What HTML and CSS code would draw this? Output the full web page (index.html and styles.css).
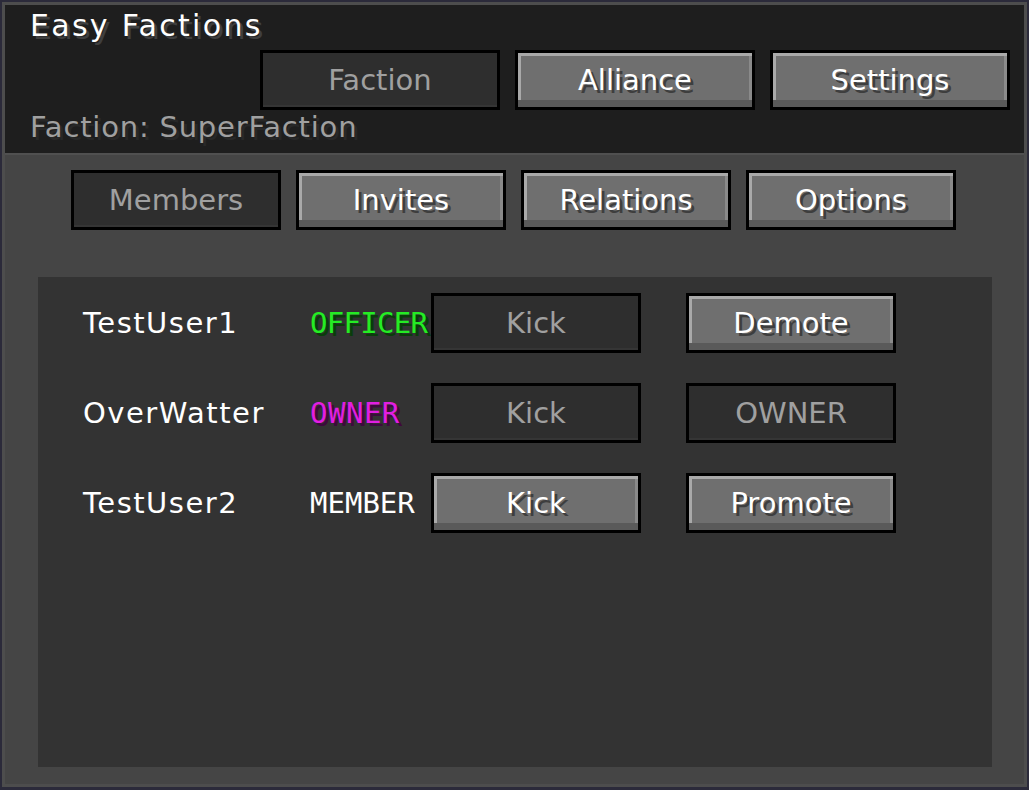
FILE: index.html
```html
<!DOCTYPE html>
<html lang="en">
<head>
<meta charset="utf-8">
<title>Easy Factions</title>
<link rel="stylesheet" href="styles.css">
</head>
<body>
<div class="window">
  <header class="head">
    <h1 class="title">Easy Factions</h1>
    <nav class="tabs-main">
      <button class="btn wide off">Faction</button>
      <button class="btn wide">Alliance</button>
      <button class="btn wide">Settings</button>
    </nav>
    <p class="subtitle">Faction: SuperFaction</p>
  </header>
  <section class="content">
    <nav class="tabs-sub">
      <button class="btn off">Members</button>
      <button class="btn">Invites</button>
      <button class="btn">Relations</button>
      <button class="btn">Options</button>
    </nav>
    <div class="panel">
      <div class="members">
        <span class="name">TestUser1</span>
        <span class="role officer">OFFICER</span>
        <button class="btn off">Kick</button>
        <button class="btn">Demote</button>

        <span class="name">OverWatter</span>
        <span class="role owner">OWNER</span>
        <button class="btn off">Kick</button>
        <button class="btn off">OWNER</button>

        <span class="name">TestUser2</span>
        <span class="role member">MEMBER</span>
        <button class="btn">Kick</button>
        <button class="btn">Promote</button>
      </div>
    </div>
  </section>
</div>
</body>
</html>
```
FILE: styles.css
```css
html, body {
  margin: 0;
  padding: 0;
}
body {
  background: #2b2a3a;
  width: 1029px;
  height: 790px;
  overflow: hidden;
  font-family: "DejaVu Sans", "Liberation Sans", sans-serif;
}
.window {
  box-sizing: border-box;
  margin: 2px 0 0 2px;
  width: 1025px;
  height: 785px;
  border: 3px solid #4d4d4d;
  display: flex;
  flex-direction: column;
  background: #454545;
}
.head {
  box-sizing: border-box;
  height: 150px;
  background: #1e1e1e;
  border-bottom: 2px solid #505050;
  padding: 6px 14px 0 25px;
  display: flex;
  flex-direction: column;
}
.title {
  margin: 0;
  font-weight: normal;
  font-size: 30px;
  line-height: 30px;
  letter-spacing: 2.3px;
  color: #ffffff;
  text-shadow: 3px 3px 0 #3f3f3f;
}
.tabs-main {
  display: flex;
  justify-content: flex-end;
  gap: 15px;
  margin-top: 9px;
}
.subtitle {
  margin: 3px 0 0 0;
  font-size: 29px;
  line-height: 29px;
  letter-spacing: 0.8px;
  color: #a0a0a0;
  text-shadow: 3px 3px 0 #282828;
}
.btn {
  box-sizing: border-box;
  width: 210px;
  height: 60px;
  padding: 0;
  margin: 0;
  border: 3px solid #000000;
  background: #6f6f6f;
  box-shadow: inset 0 -7px 0 #5a5a5a, inset 3px 3px 0 #a9a9a9, inset -3px 0 0 #8a8a8a;
  color: #ffffff;
  text-shadow: 3px 3px 0 #3e3e3e;
  font-family: "DejaVu Sans", "Liberation Sans", sans-serif;
  font-size: 29px;
  line-height: 29px;
  text-align: center;
}
.btn.wide {
  width: 240px;
}
.btn.off {
  background: #2e2e2e;
  box-shadow: inset 0 -2px 0 #353535;
  color: #a0a0a0;
  text-shadow: none;
}
.content {
  flex: 1;
  display: flex;
  flex-direction: column;
  padding: 15px 32px 17px 33px;
}
.tabs-sub {
  display: flex;
  justify-content: center;
  gap: 15px;
  margin-right: 3px;
}
.panel {
  margin-top: 47px;
  height: 490px;
  background: #333333;
  box-sizing: border-box;
  padding: 16px 0 0 45px;
}
.members {
  display: grid;
  grid-template-columns: 227px 121px 210px 210px;
  column-gap: 0;
  row-gap: 30px;
  align-items: center;
}
.members .btn:nth-child(4n) {
  margin-left: 45px;
}
.name {
  font-size: 29px;
  line-height: 29px;
  color: #ffffff;
  letter-spacing: 1.5px;
}
.role {
  font-family: "DejaVu Sans Mono", "Liberation Mono", monospace;
  font-size: 29px;
  line-height: 29px;
  white-space: nowrap;
}
.officer {
  color: #24ec24;
  text-shadow: 3px 3px 0 #0a3d0a;
  letter-spacing: -0.7px;
}
.owner {
  color: #e21ee2;
  text-shadow: 3px 3px 0 #3d0a3d;
  letter-spacing: 0.5px;
}
.member {
  color: #ffffff;
}
```
